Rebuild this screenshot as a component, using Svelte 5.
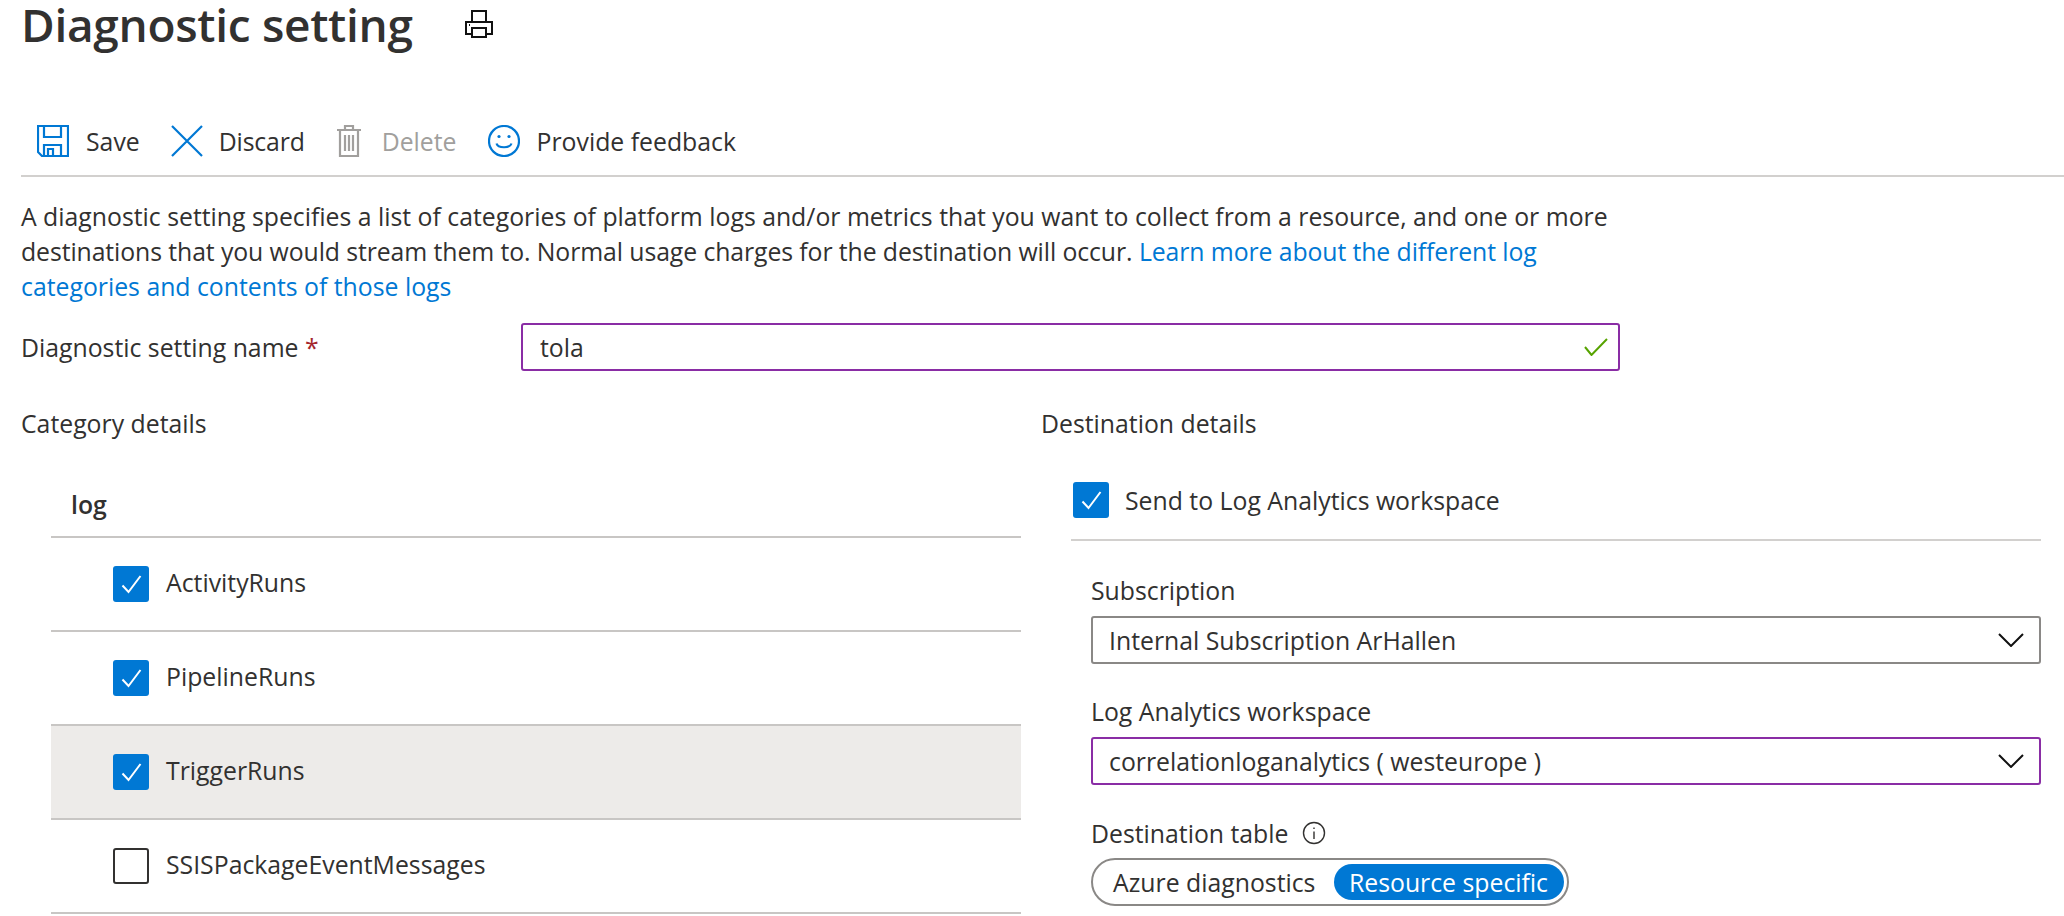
<script>
  const rows = [
    { name: 'ActivityRuns', checked: true },
    { name: 'PipelineRuns', checked: true },
    { name: 'TriggerRuns', checked: true, hover: true },
    { name: 'SSISPackageEventMessages', checked: false }
  ];
</script>

{#snippet tick()}
  <svg class="tick" viewBox="0 0 36 36" width="36" height="36" aria-hidden="true"><path d="M9.5 19.5 15.5 26 27.5 10" /></svg>
{/snippet}

{#snippet chevron()}
  <svg class="chev" viewBox="0 0 26 14" width="26" height="14" aria-hidden="true"><path d="M1 1 13 13 25 1" /></svg>
{/snippet}

<div class="page">
  <header class="title">
    <h1>Diagnostic setting</h1>
    <svg class="printer" viewBox="0 0 28 28" width="28" height="28" aria-hidden="true">
      <path d="M7 12V1H21V12M7 24H1V12H27V24H21M7 18H21V27H7Z" />
      <path d="M4 15h1" />
    </svg>
  </header>

  <nav class="toolbar">
    <button class="tool">
      <svg class="ic" viewBox="0 0 32 32" aria-hidden="true">
        <path d="M1 1H31V31H5L1 27ZM7 1V12H24V1M7 31V20H24V31M11 31V24H16V31" />
      </svg>
      <span>Save</span>
    </button>
    <button class="tool">
      <svg class="ic" viewBox="0 0 32 32" aria-hidden="true"><path d="M1 1 31 31M31 1 1 31" /></svg>
      <span class="discard">Discard</span>
    </button>
    <button class="tool off">
      <svg class="ic trash" viewBox="0 0 26 32" aria-hidden="true">
        <path d="M1 5H25M4 5V31H22V5M9 5V1H17V5M9 10V26M13 10V26M17 10V26" />
      </svg>
      <span>Delete</span>
    </button>
    <button class="tool">
      <svg class="ic" viewBox="0 0 32 32" aria-hidden="true">
        <circle cx="16" cy="16" r="15" />
        <path d="M8.5 18.5C10 23.5 22 23.5 23.5 18.5" />
        <circle class="eye" cx="11" cy="11.5" r="1.6" />
        <circle class="eye" cx="21" cy="11.5" r="1.6" />
      </svg>
      <span>Provide feedback</span>
    </button>
  </nav>

  <p class="intro">A diagnostic setting specifies a list of categories of platform logs and/or metrics that you want to collect from a resource, and one or more <span class="tight">destinations that you would stream them to. Normal usage charges for the destination will occur.</span> <a href="#learn"><span class="tight">Learn more about the different log</span> categories and contents of those logs</a></p>

  <div class="name-row">
    <label class="name-label" for="dsname">Diagnostic setting name <span class="req">*</span></label>
    <div class="field purple name-field">
      <input id="dsname" value="tola" />
      <svg class="ok" viewBox="0 0 24 18" width="24" height="18" aria-hidden="true"><path d="M1 9 7.5 17 23 1" /></svg>
    </div>
  </div>

  <div class="cols">
    <section class="left">
      <h2>Category details</h2>
      <div class="table">
        <div class="thead">log</div>
        {#each rows as r}
          <div class="row" class:hover={r.hover}>
            <span class="box" class:on={r.checked}>{#if r.checked}{@render tick()}{/if}</span>
            <span class="rowname">{r.name}</span>
          </div>
        {/each}
      </div>
    </section>

    <section class="right">
      <h2>Destination details</h2>
      <div class="send">
        <span class="box on">{@render tick()}</span>
        <span>Send to Log Analytics workspace</span>
      </div>
      <div class="dest">
        <div class="lbl lbl1">Subscription</div>
        <div class="field select">
          <span>Internal Subscription ArHallen</span>
          {@render chevron()}
        </div>
        <div class="lbl lbl2">Log Analytics workspace</div>
        <div class="field select purple">
          <span>correlationloganalytics ( westeurope )</span>
          {@render chevron()}
        </div>
        <div class="lbl lbl3">
          <span>Destination table</span>
          <svg class="info" viewBox="0 0 24 24" width="24" height="24" aria-hidden="true">
            <circle cx="12" cy="12" r="10.5" />
            <path d="M12 10.5V18M12 6.5V8" />
          </svg>
        </div>
        <div class="toggle">
          <span class="opt">Azure diagnostics</span>
          <span class="opt sel">Resource specific</span>
        </div>
      </div>
    </section>
  </div>
</div>

<style>
  :global(body) { margin: 0; background: #fff; }
  .page {
    width: 2064px;
    height: 916px;
    overflow: hidden;
    box-sizing: border-box;
    padding-left: 21px;
    font-family: "Open Sans", "Noto Sans", sans-serif;
    font-size: 24.8px;
    color: #323130;
    background: #fff;
  }
  .title { display: flex; align-items: center; height: 48px; gap: 52px; }
  h1 { margin: 0; font-size: 46px; font-weight: 600; line-height: 48px; letter-spacing: -0.3px; }
  .printer { fill: none; stroke: #111; stroke-width: 2; }
  .toolbar {
    display: flex;
    align-items: center;
    box-sizing: border-box;
    height: 68px;
    margin-top: 61px;
    padding: 0 0 3px 16px;
    border-bottom: 2px solid #d2d0ce;
    gap: 31px;
  }
  .tool {
    display: flex; align-items: center; gap: 17px;
    padding: 0; border: 0; background: none;
    font: inherit; color: inherit;
  }
  .discard { margin-left: -1px; letter-spacing: -0.15px; }
  .ic { width: 32px; height: 32px; fill: none; stroke: #0078d4; stroke-width: 2.2; }
  .ic.trash { width: 26px; stroke: #a19f9d; }
  .ic .eye { fill: #0078d4; stroke: none; }
  .off { color: #a19f9d; gap: 20px; }
  .intro { margin: 22px 0 0; width: 1610px; line-height: 35px; }
  .tight { letter-spacing: -0.09px; }
  a { color: #0078d4; text-decoration: none; }
  .name-row { display: flex; align-items: center; margin-top: 19px; }
  .name-label { width: 500px; }
  .req { color: #a4262c; }
  .field {
    display: flex; align-items: center; justify-content: space-between;
    box-sizing: border-box;
    border: 2px solid #8a8886;
    border-radius: 3px;
    height: 48px;
  }
  .purple { border-color: #8a2da5; }
  .name-field { width: 1099px; padding: 0 10px 0 17px; }
  input {
    flex: 1; border: 0; outline: 0; padding: 0;
    font: inherit; color: inherit; background: none;
  }
  .ok { fill: none; stroke: #57a300; stroke-width: 2; }
  .cols { display: grid; grid-template-columns: 1000px 1000px; column-gap: 20px; margin-top: 32px; }
  h2 { margin: 0; font: inherit; line-height: 40px; height: 40px; }
  .table { margin: 21px 0 0 30px; }
  .thead {
    display: flex; align-items: center;
    height: 74px; padding: 8px 0 0 20px;
    box-sizing: border-box;
    border-bottom: 2px solid #c8c6c4;
    font-weight: 600;
  }
  .row {
    display: flex; align-items: center; gap: 17px;
    height: 94px; box-sizing: border-box;
    padding-left: 62px;
    border-bottom: 2px solid #c8c6c4;
  }
  .rowname { padding-bottom: 4px; }
  .row.hover { background: #edebe9; }
  .box {
    flex: none; box-sizing: border-box;
    width: 36px; height: 36px;
    border: 2px solid #323130; border-radius: 3px;
    background: #fff;
  }
  .box.on { border: 0; background: #0078d4; }
  .tick { display: block; fill: none; stroke: #fff; stroke-width: 2; }
  .send {
    display: flex; align-items: center; gap: 16px;
    margin: 28px 0 0 30px; padding: 0 0 11px 2px; height: 57px;
    box-sizing: content-box;
    border-bottom: 2px solid #d2d0ce;
  }
  .dest { margin-left: 50px; }
  .lbl { line-height: 30px; }
  .lbl1 { margin-top: 34px; }
  .lbl2 { margin-top: 32px; }
  .lbl3 { margin-top: 33px; display: flex; align-items: center; gap: 14px; }
  .lbl + .field { margin-top: 11px; }
  .select { padding: 0 15px 0 16px; }
  .chev { fill: none; stroke: #111; stroke-width: 2; }
  .info { fill: none; stroke: #323130; stroke-width: 1.4; }
  .toggle {
    display: inline-flex; align-items: center; justify-content: space-between;
    box-sizing: border-box;
    width: 478px; height: 48px; margin-top: 10px;
    border: 2px solid #8a8886; border-radius: 24px;
    padding: 0 3px 0 20px;
  }
  .sel {
    height: 36px; line-height: 36px; padding: 0 16px 0 15px;
    background: #0078d4; color: #fff; border-radius: 18px;
  }
</style>
